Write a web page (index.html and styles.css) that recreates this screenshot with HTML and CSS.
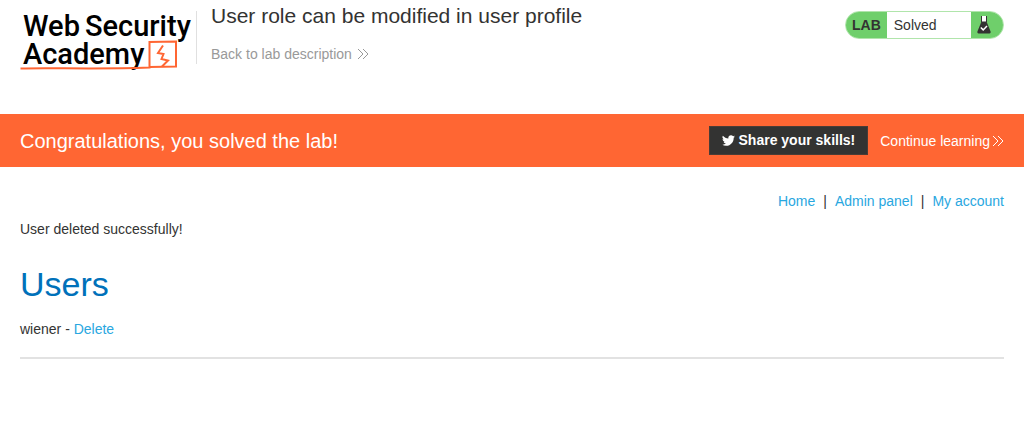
FILE: index.html
```html
<!DOCTYPE html>
<html lang="en">
<head>
<meta charset="utf-8">
<meta name="viewport" content="width=device-width, initial-scale=1">
<title>User role can be modified in user profile</title>
<link rel="stylesheet" href="styles.css">
</head>
<body>
<header class="lab-header">
  <a class="logo" href="#" aria-label="Web Security Academy">
    <svg width="176" height="66" viewBox="0 0 176 66">
      <text class="logo-text" x="3" y="30">Web</text>
      <text class="logo-text" x="65" y="30">Security</text>
      <text class="logo-text" x="3" y="58">Academy</text>
      <g class="logo-line">
        <path d="M0.500 62.500 C30 61.500 75 63.500 129.500 61.500 L129.500 36 L156 35.500 L156 60.500 L130 61"/>
        <path d="M143 39.500 L138 47 L143.500 48 L141.500 53 L148 54.500 L142 60.500"/>
      </g>
    </svg>
  </a>
  <div class="title">
    <h2>User role can be modified in user profile</h2>
    <a class="back-link" href="#">Back to lab description
      <svg class="chevrons" width="12" height="12" viewBox="0 0 12 12"><path d="M1 1 L6 6 L1 11 M6 1 L11 6 L6 11"/></svg>
    </a>
  </div>
  <div class="lab-status">
    <span class="lab-tag">LAB</span>
    <span class="lab-state">Solved</span>
    <span class="lab-icon">
      <svg width="16" height="20" viewBox="0 0 16 20">
        <path fill="#fff" d="M5.500 1 H10.500 V7 H5.500 Z"/>
        <path fill="#333332" d="M5 1 H6 V7 H5 Z M10 1 H11 V7 H10 Z M5.500 6.500 H10.500 L14.600 16.500 Q15 18.500 13.500 18.500 H2.500 Q1 18.500 1.400 16.500 Z"/>
        <path fill="none" stroke="#fff" stroke-width="1.500" d="M4.800 12.500 L7.200 14.900 L11 11"/>
      </svg>
    </span>
  </div>
</header>
<section class="banner">
  <h4>Congratulations, you solved the lab!</h4>
  <div class="banner-actions">
    <button class="share" type="button">
      <svg width="13" height="13" viewBox="0 0 24 24"><path fill="#fff" d="M23.950 4.570a10 10 0 0 1-2.820.770 4.960 4.960 0 0 0 2.160-2.720c-.950.550-2 .950-3.130 1.180a4.920 4.920 0 0 0-8.380 4.480C7.690 8.100 4.070 6.130 1.640 3.160a4.920 4.920 0 0 0 1.520 6.570 4.900 4.900 0 0 1-2.230-.610v.060a4.920 4.920 0 0 0 3.950 4.830 5 5 0 0 1-2.210.080 4.940 4.940 0 0 0 4.600 3.420A9.870 9.870 0 0 1 0 19.540a14 14 0 0 0 7.550 2.210c9.050 0 14-7.500 14-13.980 0-.210 0-.420-.020-.630a9.940 9.940 0 0 0 2.420-2.570z"/></svg>
      Share your skills!
    </button>
    <a class="continue" href="#">Continue learning
      <svg class="chevrons" width="12" height="12" viewBox="0 0 12 12"><path d="M1 1 L6 6 L1 11 M6 1 L11 6 L6 11"/></svg>
    </a>
  </div>
</section>
<main class="content">
  <nav class="top-links">
    <a href="#">Home</a><span>|</span><a href="#">Admin panel</a><span>|</span><a href="#">My account</a>
  </nav>
  <p class="message">User deleted successfully!</p>
  <h1>Users</h1>
  <div class="user">wiener - <a href="#">Delete</a></div>
  <hr>
</main>
</body>
</html>
```
FILE: styles.css
```css
* {
  box-sizing: border-box;
}

body {
  margin: 0;
  background: #fff;
  color: #333332;
  font-family: "Liberation Sans", Arial, sans-serif;
  font-size: 14px;
  line-height: 20px;
}

h1, h2, h4, p {
  margin: 0;
  font-weight: 400;
}

a {
  color: #29a7df;
  text-decoration: none;
}

.lab-header {
  display: flex;
  align-items: flex-start;
  padding: 0 20px 40px;
}

.logo {
  display: flex;
  padding-top: 6px;
}

.logo svg {
  overflow: visible;
  margin-bottom: 2px;
}

.logo-text {
  font-family: Roboto, sans-serif;
  font-size: 29px;
  font-weight: 500;
  fill: #000;
}

.logo-line {
  fill: none;
  stroke: #ff6633;
  stroke-width: 2;
}

.title {
  flex: 1;
  margin-top: 11px;
  height: 53px;
  padding-left: 14px;
  border-left: 1px solid #e0e0e0;
}

.title h2 {
  margin-top: -8px;
  font-size: 21px;
  line-height: 26px;
}

.back-link {
  display: inline-flex;
  align-items: center;
  gap: 5px;
  margin-top: 15px;
  color: #999;
}

.chevrons {
  fill: none;
  stroke: currentColor;
  stroke-width: 1;
}

.lab-status {
  display: flex;
  margin-top: 11px;
  width: 159px;
  height: 28px;
  border: 1px solid #b0e5ab;
  border-radius: 14px;
  overflow: hidden;
  line-height: 26px;
}

.lab-tag {
  padding: 0 6px;
  background: #6fcf6b;
  font-weight: 700;
}

.lab-state {
  flex: 1;
  padding-left: 7px;
}

.lab-icon {
  display: flex;
  align-items: center;
  width: 32px;
  padding-left: 5px;
  background: #6fcf6b;
}

.banner {
  display: flex;
  align-items: center;
  justify-content: space-between;
  padding: 12px 20px;
  background: #ff6633;
  color: #fff;
}

.banner h4 {
  font-size: 20px;
  line-height: 28px;
}

.banner-actions {
  display: flex;
  align-items: center;
  gap: 12px;
}

.share {
  display: flex;
  align-items: center;
  gap: 4px;
  padding: 4px 12px;
  border: 1px solid #4a3c36;
  background: #333332;
  color: #fff;
  font: inherit;
  font-weight: 700;
  line-height: 19px;
}

.continue {
  display: flex;
  align-items: center;
  gap: 2px;
  color: #fff;
}

.content {
  padding: 24px 20px;
}

.top-links {
  display: flex;
  justify-content: flex-end;
  gap: 8px;
}

.message {
  margin-top: 8px;
}

.content h1 {
  margin: 24px 0 14px;
  color: #0071ba;
  font-size: 34px;
  line-height: 42px;
}

hr {
  margin: 18px 0 0;
  border: 0;
  border-top: 2px solid #e2e2e2;
}
```
